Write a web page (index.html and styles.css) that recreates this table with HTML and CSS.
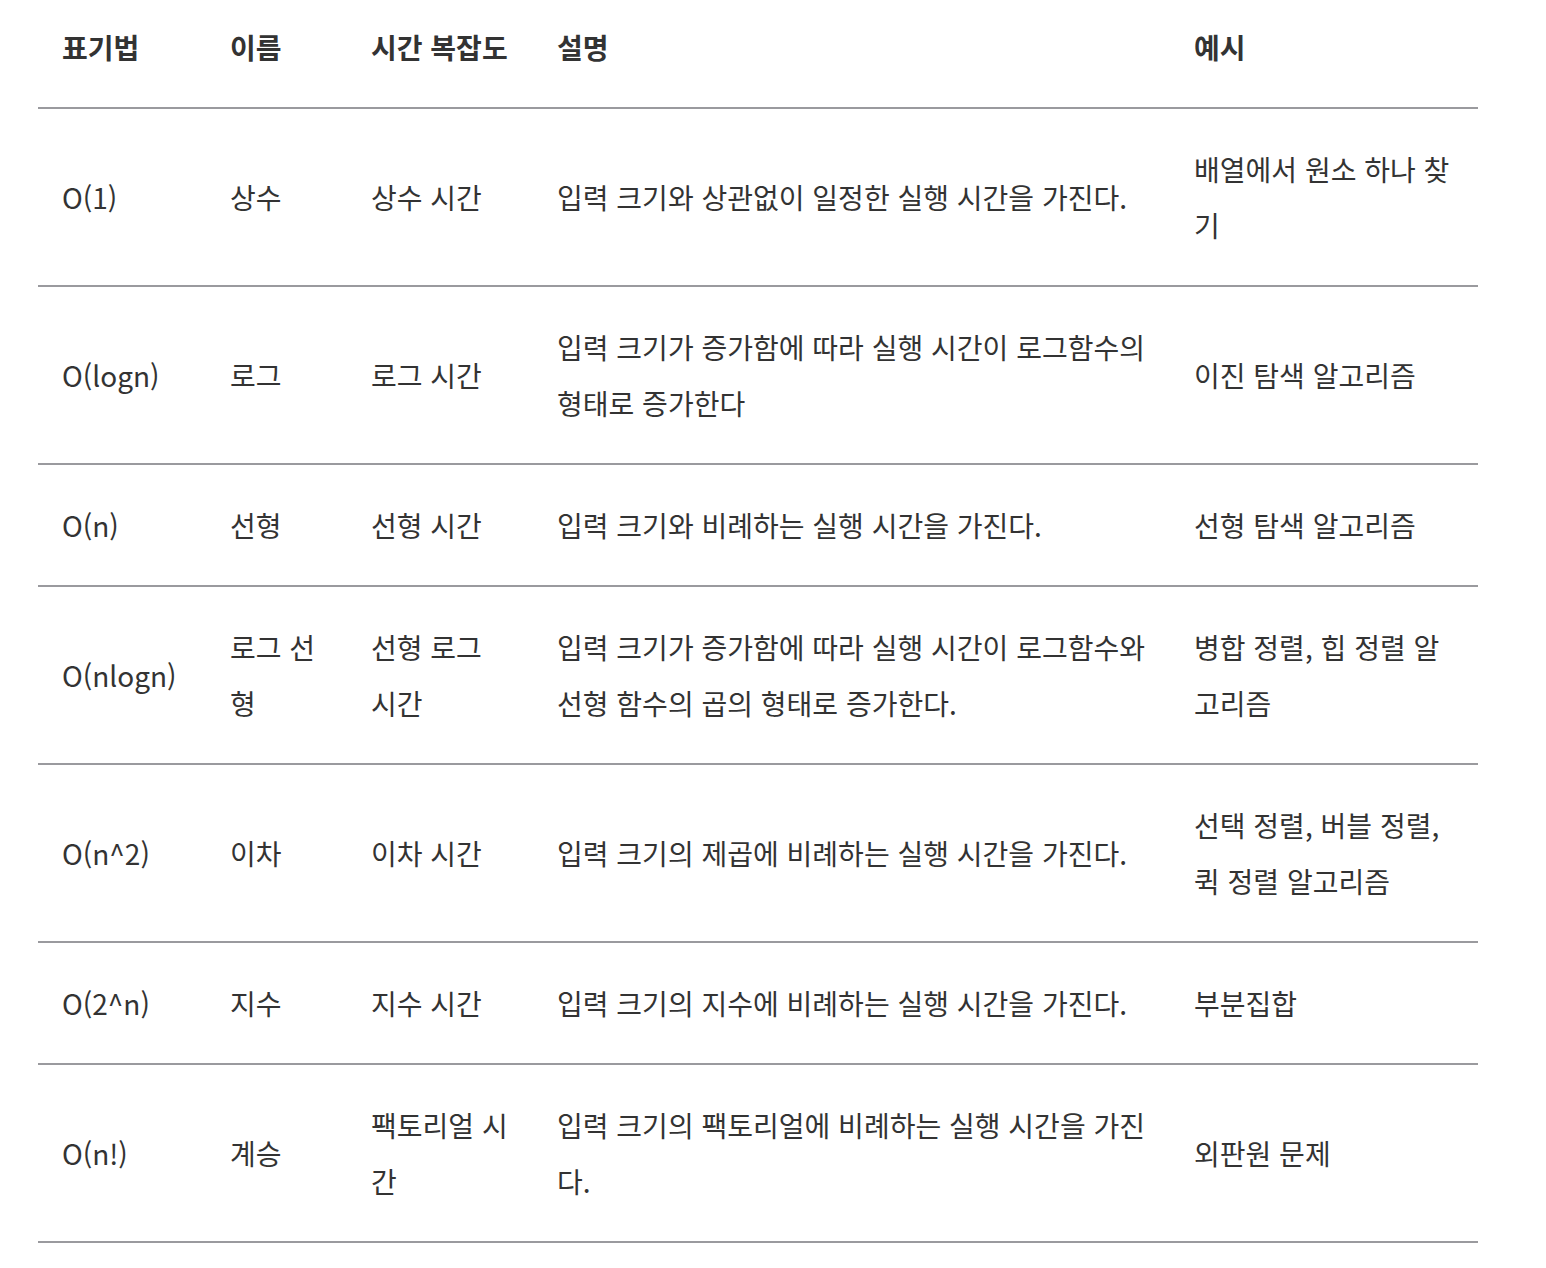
FILE: index.html
```html
<!DOCTYPE html>
<html lang="ko">
<head>
<meta charset="utf-8">
<link rel="stylesheet" href="styles.css">
</head>
<body>
<div class="wrap">
<table class="bigo">
  <colgroup>
    <col class="c1"><col class="c2"><col class="c3"><col class="c4"><col class="c5">
  </colgroup>
  <thead>
    <tr><th>표기법</th><th>이름</th><th>시간 복잡도</th><th>설명</th><th>예시</th></tr>
  </thead>
  <tbody>
    <tr><td>O(1)</td><td>상수</td><td>상수 시간</td><td>입력 크기와 상관없이 일정한 실행 시간을 가진다.</td><td>배열에서 원소 하나 찾기</td></tr>
    <tr><td>O(logn)</td><td>로그</td><td>로그 시간</td><td>입력 크기가 증가함에 따라 실행 시간이 로그함수의 형태로 증가한다</td><td>이진 탐색 알고리즘</td></tr>
    <tr><td>O(n)</td><td>선형</td><td>선형 시간</td><td>입력 크기와 비례하는 실행 시간을 가진다.</td><td>선형 탐색 알고리즘</td></tr>
    <tr><td>O(nlogn)</td><td>로그 선형</td><td>선형 로그 시간</td><td>입력 크기가 증가함에 따라 실행 시간이 로그함수와 선형 함수의 곱의 형태로 증가한다.</td><td>병합 정렬, 힙 정렬 알고리즘</td></tr>
    <tr><td>O(n^2)</td><td>이차</td><td>이차 시간</td><td>입력 크기의 제곱에 비례하는 실행 시간을 가진다.</td><td>선택 정렬, 버블 정렬, 퀵 정렬 알고리즘</td></tr>
    <tr><td>O(2^n)</td><td>지수</td><td>지수 시간</td><td>입력 크기의 지수에 비례하는 실행 시간을 가진다.</td><td>부분집합</td></tr>
    <tr><td>O(n!)</td><td>계승</td><td>팩토리얼 시간</td><td>입력 크기의 팩토리얼에 비례하는 실행 시간을 가진다.</td><td>외판원 문제</td></tr>
  </tbody>
</table>
</div>
</body>
</html>
```

FILE: styles.css
```css
html, body {
  margin: 0;
  padding: 0;
  background: #ffffff;
}
.wrap {
  padding: 0 38px;
}
.bigo {
  width: 1440px;
  table-layout: fixed;
  border-collapse: collapse;
  font-family: "Noto Sans CJK KR", "Noto Sans", sans-serif;
  font-size: 28px;
  line-height: 56px;
  color: #333333;
}
.c1 { width: 168px; }
.c2 { width: 141px; }
.c3 { width: 186px; }
.c4 { width: 637px; }
.c5 { width: 308px; }
.bigo th,
.bigo td {
  text-align: left;
  vertical-align: middle;
  padding: 32px 24px;
  border-bottom: 2px solid #9a9a9e;
  word-break: normal;
  line-break: anywhere;
}
.bigo th {
  font-weight: 700;
  padding-top: 19px;
}
.bigo td {
  font-weight: 400;
}
```
